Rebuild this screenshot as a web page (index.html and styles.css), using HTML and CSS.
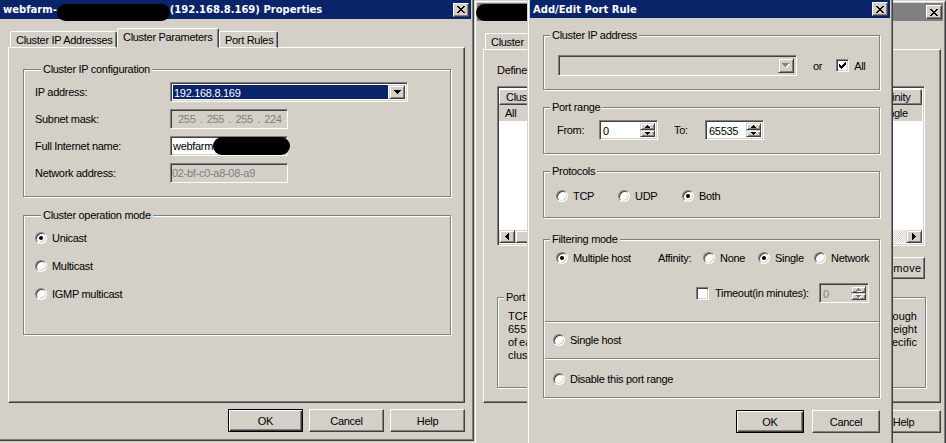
FILE: index.html
```html
<!DOCTYPE html>
<html lang="en">
<head>
    <meta charset="UTF-8">
    <meta name="viewport" content="width=device-width, initial-scale=1.0">
    <title>Add/Edit Port Rule</title>
    <link rel="stylesheet" href="styles.css">
</head>
<body>
<div class="screen">

    <!-- cluster properties window -->
    <div class="win win-props">
        <div class="titlebar">
            <span class="title-text">webfarm-</span><span class="blob blob-title"></span><span class="title-text">(192.168.8.169) Properties</span>
            <span class="close-btn"><svg width="8" height="7" viewBox="0 0 8 7" shape-rendering="crispEdges"><path d="M0 0h2v1H0zM6 0h2v1H6zM1 1h2v1H1zM5 1h2v1H5zM2 2h4v1H2zM3 3h2v1H3zM2 4h4v1H2zM1 5h2v1H1zM5 5h2v1H5zM0 6h2v1H0zM6 6h2v1H6z" fill="#000"/></svg></span>
        </div>
        <div class="win-body body-props">
            <div class="tabs">
                <div class="tab tab-ip">Cluster IP Addresses</div>
                <div class="tab tab-params active">Cluster Parameters</div>
                <div class="tab tab-rules">Port Rules</div>
            </div>
            <div class="panel panel-props">
                <div class="group group-ipconf">
                    <div class="legend">Cluster IP configuration</div>
                    <div class="field-row first">
                        <span class="field-label">IP address:</span>
                        <div class="combo combo-ip">
                            <span class="combo-value">192.168.8.169</span>
                            <span class="drop-btn"><svg width="7" height="4" viewBox="0 0 7 4" shape-rendering="crispEdges"><path d="M0 0h7v1H0zM1 1h5v1H1zM2 2h3v1H2zM3 3h1v1H3z" fill="#000"/></svg></span>
                        </div>
                    </div>
                    <div class="field-row">
                        <span class="field-label">Subnet mask:</span>
                        <div class="edit edit-short disabled ip-text">255 . 255 . 255 . 224</div>
                    </div>
                    <div class="field-row">
                        <span class="field-label">Full Internet name:</span>
                        <div class="edit edit-short name-text">webfarm-<span class="blob blob-name"></span></div>
                    </div>
                    <div class="field-row">
                        <span class="field-label">Network address:</span>
                        <div class="edit edit-short disabled mac-text">02-bf-c0-a8-08-a9</div>
                    </div>
                </div>
                <div class="group group-mode">
                    <div class="legend">Cluster operation mode</div>
                    <div class="radio-row first"><span class="radio checked"></span>Unicast</div>
                    <div class="radio-row"><span class="radio"></span>Multicast</div>
                    <div class="radio-row"><span class="radio"></span>IGMP multicast</div>
                </div>
            </div>
            <div class="dlg-buttons buttons-props">
                <button class="btn btn-wide default">OK</button>
                <button class="btn btn-wide">Cancel</button>
                <button class="btn btn-wide">Help</button>
            </div>
        </div>
    </div>

    <!-- port rules window (behind the dialog) -->
    <div class="win win-mid">
        <div class="titlebar inactive">
            <span class="blob blob-mid"></span><span class="title-text">(192.168.8.169) Properties</span>
            <span class="close-btn"><svg width="8" height="7" viewBox="0 0 8 7" shape-rendering="crispEdges"><path d="M0 0h2v1H0zM6 0h2v1H6zM1 1h2v1H1zM5 1h2v1H5zM2 2h4v1H2zM3 3h2v1H3zM2 4h4v1H2zM1 5h2v1H1zM5 5h2v1H5zM0 6h2v1H0zM6 6h2v1H6z" fill="#000"/></svg></span>
        </div>
        <div class="win-body body-mid">
            <div class="tabs">
                <div class="tab tab-ip">Cluster IP Addresses</div>
                <div class="tab tab-params">Cluster Parameters</div>
                <div class="tab tab-rules active">Port Rules</div>
            </div>
            <div class="panel panel-mid">
                <div class="caption">Defined port rules:</div>
                <div class="listview">
                    <div class="lv-header">
                        <span class="lv-col col-ip">Cluster IP address</span>
                        <span class="lv-col col-start">Start</span>
                        <span class="lv-col col-end">End</span>
                        <span class="lv-col col-proto">Protocol</span>
                        <span class="lv-col col-mode">Mode</span>
                        <span class="lv-col col-prio">Priority</span>
                        <span class="lv-col col-load">Load</span>
                        <span class="lv-col col-aff">Affinity</span>
                    </div>
                    <div class="lv-row">
                        <span class="lv-cell col-ip">All</span>
                        <span class="lv-cell col-start">0</span>
                        <span class="lv-cell col-end">65535</span>
                        <span class="lv-cell col-proto">Both</span>
                        <span class="lv-cell col-mode">Multiple</span>
                        <span class="lv-cell col-prio"></span>
                        <span class="lv-cell col-load">Equal</span>
                        <span class="lv-cell col-aff">Single</span>
                    </div>
                    <div class="lv-fill"></div>
                    <div class="hscroll">
                        <span class="scroll-btn"><svg width="4" height="7" viewBox="0 0 4 7" shape-rendering="crispEdges"><path d="M3 0h1v7H3zM2 1h1v5H2zM1 2h1v3H1zM0 3h1v1H0z" fill="#000"/></svg></span>
                        <span class="scroll-thumb"></span>
                        <span class="scroll-track"></span>
                        <span class="scroll-btn"><svg width="4" height="7" viewBox="0 0 4 7" shape-rendering="crispEdges"><path d="M0 0h1v7H0zM1 1h1v5H1zM2 2h1v3H2zM3 3h1v1H3z" fill="#000"/></svg></span>
                    </div>
                </div>
                <div class="list-buttons">
                    <button class="btn btn-wide">Add...</button>
                    <button class="btn btn-wide">Edit...</button>
                    <button class="btn btn-remove">Remove</button>
                </div>
                <div class="group group-desc">
                    <div class="legend">Port rule description</div>
                    <div class="desc">
                        <span class="desc-line">TCP and UDP traffic directed to any cluster IP address that arrives on ports 0 through</span>
                        <span class="desc-line">65535 is balanced across multiple members of the cluster according to the load weight</span>
                        <span class="desc-line">of each member. Client IP addresses are used to assign client connections to a specific</span>
                        <span class="desc-line last">cluster host.</span>
                    </div>
                </div>
            </div>
            <div class="dlg-buttons buttons-mid">
                <button class="btn btn-wide">OK</button>
                <button class="btn btn-wide">Cancel</button>
                <button class="btn btn-wide">Help</button>
            </div>
        </div>
    </div>

    <!-- add/edit port rule dialog -->
    <div class="win win-rule">
        <div class="titlebar">
            <span class="title-text">Add/Edit Port Rule</span>
            <span class="close-btn"><svg width="8" height="7" viewBox="0 0 8 7" shape-rendering="crispEdges"><path d="M0 0h2v1H0zM6 0h2v1H6zM1 1h2v1H1zM5 1h2v1H5zM2 2h4v1H2zM3 3h2v1H3zM2 4h4v1H2zM1 5h2v1H1zM5 5h2v1H5zM0 6h2v1H0zM6 6h2v1H6z" fill="#000"/></svg></span>
        </div>
        <div class="win-body body-rule">
            <div class="group group-cip">
                <div class="legend">Cluster IP address</div>
                <div class="cip-row">
                    <div class="combo combo-cip disabled">
                        <span class="combo-value"></span>
                        <span class="drop-btn"><svg width="8" height="5" viewBox="0 0 8 5" shape-rendering="crispEdges"><path d="M1 1h7v1H1zM2 2h5v1H2zM3 3h3v1H3zM4 4h1v1H4z" fill="#fff"/><path d="M0 0h7v1H0zM1 1h5v1H1zM2 2h3v1H2zM3 3h1v1H3z" fill="#808080"/></svg></span>
                    </div>
                    <span class="or-text">or</span>
                    <span class="checkbox"><svg width="7" height="7" viewBox="0 0 7 7" shape-rendering="crispEdges"><path d="M6 0h1v3H6zM5 1h1v3H5zM4 2h1v3H4zM3 3h1v3H3zM2 4h1v3H2zM1 3h1v3H1zM0 2h1v3H0z" fill="#000"/></svg></span>
                    <span class="check-label">All</span>
                </div>
            </div>

            <div class="group group-range">
                <div class="legend">Port range</div>
                <div class="range-row">
                    <span class="range-label from-label">From:</span>
                    <div class="spin">
                        <span class="spin-value">0</span>
                        <span class="spin-btns">
                            <span class="spin-btn"><svg width="5" height="3" viewBox="0 0 5 3" shape-rendering="crispEdges"><path d="M2 0h1v1H2zM1 1h3v1H1zM0 2h5v1H0z" fill="#000"/></svg></span>
                            <span class="spin-btn"><svg width="5" height="3" viewBox="0 0 5 3" shape-rendering="crispEdges"><path d="M0 0h5v1H0zM1 1h3v1H1zM2 2h1v1H2z" fill="#000"/></svg></span>
                        </span>
                    </div>
                    <span class="range-label to-label">To:</span>
                    <div class="spin">
                        <span class="spin-value">65535</span>
                        <span class="spin-btns">
                            <span class="spin-btn"><svg width="5" height="3" viewBox="0 0 5 3" shape-rendering="crispEdges"><path d="M2 0h1v1H2zM1 1h3v1H1zM0 2h5v1H0z" fill="#000"/></svg></span>
                            <span class="spin-btn"><svg width="5" height="3" viewBox="0 0 5 3" shape-rendering="crispEdges"><path d="M0 0h5v1H0zM1 1h3v1H1zM2 2h1v1H2z" fill="#000"/></svg></span>
                        </span>
                    </div>
                </div>
            </div>

            <div class="group group-proto">
                <div class="legend">Protocols</div>
                <div class="option-row">
                    <span class="opt opt-tcp"><span class="radio"></span>TCP</span>
                    <span class="opt opt-udp"><span class="radio"></span>UDP</span>
                    <span class="opt"><span class="radio checked"></span>Both</span>
                </div>
            </div>

            <div class="group group-filter">
                <div class="legend">Filtering mode</div>
                <div class="option-row filter-row">
                    <span class="opt opt-multi"><span class="radio checked"></span>Multiple host</span>
                    <span class="opt opt-aff">Affinity:</span>
                    <span class="opt opt-none"><span class="radio"></span>None</span>
                    <span class="opt opt-single"><span class="radio checked"></span>Single</span>
                    <span class="opt"><span class="radio"></span>Network</span>
                </div>
                <div class="timeout-row">
                    <span class="checkbox"></span>
                    <span class="check-label">Timeout(in minutes):</span>
                    <div class="spin spin-timeout disabled">
                        <span class="spin-value">0</span>
                        <span class="spin-btns">
                            <span class="spin-btn"><svg width="6" height="4" viewBox="0 0 6 4" shape-rendering="crispEdges"><path d="M3 1h1v1H3zM2 2h3v1H2zM1 3h5v1H1z" fill="#fff"/><path d="M2 0h1v1H2zM1 1h3v1H1zM0 2h5v1H0z" fill="#808080"/></svg></span>
                            <span class="spin-btn"><svg width="6" height="4" viewBox="0 0 6 4" shape-rendering="crispEdges"><path d="M1 1h5v1H1zM2 2h3v1H2zM3 3h1v1H3z" fill="#fff"/><path d="M0 0h5v1H0zM1 1h3v1H1zM2 2h1v1H2z" fill="#808080"/></svg></span>
                        </span>
                    </div>
                </div>
                <div class="separator sep-first"></div>
                <div class="option-row section-row single-row"><span class="radio"></span>Single host</div>
                <div class="separator sep-second"></div>
                <div class="option-row section-row disable-row"><span class="radio"></span>Disable this port range</div>
            </div>

            <div class="dlg-buttons buttons-rule">
                <button class="btn btn-rule default">OK</button>
                <button class="btn btn-rule">Cancel</button>
            </div>
        </div>
    </div>

</div>
</body>
</html>
```

FILE: styles.css
```css
body {
    margin: 0;
    font-family: "Liberation Sans", Arial, sans-serif;
    font-size: 11px;
    letter-spacing: -0.3px;
    color: #000;
    background-color: #d4d0c8;
}

.screen {
    position: relative;
    width: 946px;
    height: 443px;
    overflow: hidden;
    background-color: #d4d0c8;
}

/* windows */
.win {
    position: absolute;
    box-sizing: border-box;
    background-color: #d4d0c8;
    border: 1px solid;
    border-color: #d4d0c8 #404040 #404040 #d4d0c8;
    box-shadow: inset 1px 1px #fff, inset -1px -1px #808080;
    padding: 2px;
}

.win-props {
    left: -3px;
    top: -3px;
    width: 477px;
    height: 444px;
    z-index: 1;
}

.win-mid {
    left: 474px;
    top: 0;
    width: 472px;
    height: 470px;
    z-index: 2;
}

.win-rule {
    left: 527px;
    top: -3px;
    width: 366px;
    height: 470px;
    z-index: 3;
}

.titlebar {
    display: flex;
    align-items: center;
    height: 18px;
    padding-left: 3px;
    background-color: #0a246a;
    color: #fff;
    font-family: "DejaVu Sans", Verdana, sans-serif;
    font-weight: bold;
    font-size: 10px;
    letter-spacing: 0;
    white-space: nowrap;
}

.win-props .titlebar {
    height: 19px;
}

.titlebar.inactive {
    background-color: #808080;
    color: #d4d0c8;
    padding-left: 0;
}

.close-btn {
    margin-left: auto;
    margin-right: 2px;
    box-sizing: border-box;
    width: 16px;
    height: 14px;
    display: flex;
    align-items: center;
    justify-content: center;
    background-color: #d4d0c8;
    border: 1px solid;
    border-color: #fff #404040 #404040 #fff;
    box-shadow: inset -1px -1px #808080;
}

.win-mid .close-btn {
    margin-right: 1px;
}

.blob {
    display: inline-block;
    background-color: #000;
}

.blob-title {
    width: 113px;
    height: 17px;
    border-radius: 9px;
    align-self: flex-end;
    margin-bottom: -2px;
}

.blob-mid {
    width: 80px;
    height: 17px;
    border-radius: 9px;
    margin-left: -1px;
}

.blob-name {
    width: 77px;
    height: 18px;
    border-radius: 9px;
    margin-left: -3px;
    vertical-align: top;
}

/* tabs */
.body-props {
    padding: 9px 0 0 8px;
}

.body-mid {
    padding: 9px 0 0 6px;
}

.body-rule {
    padding: 0 10px 0 13px;
}

.tabs {
    display: flex;
    align-items: flex-end;
    height: 20px;
    padding-left: 2px;
    margin-bottom: -1px;
    position: relative;
}

.tab {
    box-sizing: border-box;
    height: 17px;
    display: flex;
    align-items: center;
    padding: 0 0 0 5px;
    border: 1px solid;
    border-color: #fff #404040 #fff #fff;
    box-shadow: inset -1px 0 #808080;
    border-radius: 2px 2px 0 0;
    white-space: nowrap;
}

.tab-ip {
    width: 107px;
}

.tab-params {
    width: 102px;
}

.tab-rules {
    width: 59px;
}

.tab.active {
    height: 20px;
    padding-bottom: 2px;
    border-bottom-color: #d4d0c8;
    background-color: #d4d0c8;
    z-index: 1;
}

.panel {
    box-sizing: border-box;
    border: 1px solid;
    border-color: #fff #404040 #404040 #fff;
    box-shadow: inset -1px -1px #808080;
}

.panel-props {
    width: 457px;
    height: 356px;
    padding: 21px 0 0 14px;
}

.panel-mid {
    width: 458px;
    height: 354px;
    padding: 0 0 0 13px;
}

/* group boxes */
.group {
    box-sizing: border-box;
    border: 1px solid #808080;
    box-shadow: inset 1px 1px #fff, 1px 1px #fff;
}

.legend {
    width: max-content;
    margin: -7px 0 0 6px;
    padding: 0 2px;
    line-height: 13px;
    background-color: #d4d0c8;
}

.group-ipconf {
    width: 428px;
    height: 128px;
    padding-left: 11px;
}

.group-mode {
    width: 428px;
    height: 120px;
    margin-top: 18px;
    padding-left: 11px;
}

.field-row {
    display: flex;
    align-items: center;
    height: 20px;
    margin-top: 7px;
}

.field-row.first {
    margin-top: 6px;
}

.field-label {
    width: 135px;
}

/* edit boxes */
.edit, .combo, .spin {
    box-sizing: border-box;
    height: 20px;
    background-color: #fff;
    border: 1px solid;
    border-color: #808080 #fff #fff #808080;
    box-shadow: inset 1px 1px #404040, inset -1px -1px #d4d0c8;
    white-space: nowrap;
}

.edit {
    line-height: 18px;
    padding-left: 2px;
}

.edit-short {
    width: 118px;
}

.edit.disabled, .combo.disabled, .spin.disabled {
    background-color: #d4d0c8;
    color: #808080;
}

.ip-text {
    padding-left: 7px;
    word-spacing: 1.5px;
}

.mac-text {
    padding-left: 1px;
}

.combo {
    display: flex;
    padding: 2px;
}

.combo-ip {
    width: 238px;
}

.combo-value {
    flex: 1;
    line-height: 16px;
    padding-left: 1px;
}

.combo-ip .combo-value {
    background-color: #0a246a;
    color: #fff;
    margin: 0 1px 0 0;
}

.drop-btn {
    box-sizing: border-box;
    width: 16px;
    display: flex;
    align-items: center;
    justify-content: center;
    background-color: #d4d0c8;
    border: 1px solid;
    border-color: #d4d0c8 #404040 #404040 #d4d0c8;
    box-shadow: inset 1px 1px #fff, inset -1px -1px #808080;
}

/* radios and checkboxes */
.radio-row {
    display: flex;
    align-items: center;
    height: 16px;
    margin-top: 12px;
}

.radio-row.first {
    margin-top: 8px;
}

.radio {
    box-sizing: border-box;
    position: relative;
    flex: none;
    width: 12px;
    height: 12px;
    margin-right: 5px;
    border-radius: 50%;
    background-color: #fff;
    border: 1px solid;
    border-color: #808080 #fff #fff #808080;
    box-shadow: inset 1px 1px #404040, inset -1px -1px #d4d0c8;
}

.radio.checked::after {
    content: "";
    position: absolute;
    left: 3px;
    top: 3px;
    width: 4px;
    height: 4px;
    border-radius: 50%;
    background-color: #000;
}

.checkbox {
    box-sizing: border-box;
    flex: none;
    width: 13px;
    height: 13px;
    display: flex;
    align-items: center;
    justify-content: center;
    background-color: #fff;
    border: 1px solid;
    border-color: #808080 #fff #fff #808080;
    box-shadow: inset 1px 1px #404040, inset -1px -1px #d4d0c8;
}

/* buttons */
.dlg-buttons {
    display: flex;
    justify-content: flex-end;
}

.buttons-props {
    width: 457px;
    margin-top: 6px;
    gap: 6px;
}

.buttons-mid {
    width: 458px;
    margin-top: 7px;
    gap: 6px;
}

.buttons-rule {
    width: 337px;
    margin-top: 12px;
    gap: 8px;
}

.btn {
    box-sizing: border-box;
    height: 23px;
    padding: 0;
    font-family: "Liberation Sans", Arial, sans-serif;
    font-size: 11px;
    letter-spacing: inherit;
    color: #000;
    background-color: #d4d0c8;
    border: 1px solid;
    border-color: #fff #404040 #404040 #fff;
    box-shadow: inset -1px -1px #808080;
}

.btn.default {
    border-color: #000;
    box-shadow: inset 1px 1px #fff, inset -1px -1px #404040, inset -2px -2px #808080;
}

.btn-wide {
    width: 75px;
}

.btn-rule {
    width: 68px;
}

.btn-remove {
    width: 56px;
    height: 22px;
    padding-left: 6px;
    letter-spacing: 0.3px;
}

/* port rules list */
.caption {
    margin-top: 14px;
    line-height: 13px;
}

.listview {
    box-sizing: border-box;
    width: 428px;
    height: 160px;
    margin-top: 9px;
    display: flex;
    flex-direction: column;
    background-color: #fff;
    border: 1px solid;
    border-color: #808080 #fff #fff #808080;
    box-shadow: inset 1px 1px #404040, inset -1px -1px #d4d0c8;
    padding: 2px 2px 2px 1px;
}

.lv-header, .lv-row {
    display: flex;
    white-space: nowrap;
}

.lv-col {
    box-sizing: border-box;
    height: 16px;
    line-height: 14px;
    padding-left: 6px;
    overflow: hidden;
    background-color: #d4d0c8;
    border: 1px solid;
    border-color: #fff #404040 #404040 #fff;
    box-shadow: inset -1px -1px #808080;
}

.lv-row {
    background-color: #d4d0c8;
    height: 16px;
    line-height: 16px;
}

.lv-cell {
    box-sizing: border-box;
    padding-left: 6px;
    overflow: hidden;
}

.col-ip { width: 100px; }
.col-start { width: 40px; }
.col-end { width: 45px; }
.col-proto { width: 52px; }
.col-mode { width: 50px; }
.col-prio { width: 45px; }
.col-load { width: 45px; }
.col-aff { flex: 1; padding-left: 3px; }

.lv-fill {
    flex: 1;
}

.hscroll {
    display: flex;
    height: 13px;
}

.scroll-btn, .scroll-thumb {
    box-sizing: border-box;
    background-color: #d4d0c8;
    border: 1px solid;
    border-color: #d4d0c8 #404040 #404040 #d4d0c8;
    box-shadow: inset 1px 1px #fff, inset -1px -1px #808080;
}

.scroll-btn {
    width: 16px;
    display: flex;
    align-items: center;
    justify-content: center;
}

.scroll-thumb {
    width: 330px;
}

.scroll-track {
    flex: 1;
    background: repeating-conic-gradient(#fff 0 25%, #d4d0c8 0 50%) 0 0 / 2px 2px;
}

.list-buttons {
    width: 428px;
    display: flex;
    justify-content: flex-end;
    gap: 6px;
    margin-top: 11px;
}

.list-buttons .btn {
    height: 22px;
}

.group-desc {
    width: 429px;
    height: 91px;
    margin-top: 18px;
}

.desc {
    margin-top: 6px;
    padding: 0 8px 0 10px;
    line-height: 13px;
    letter-spacing: 0;
    word-spacing: -2px;
}

.desc-line {
    display: block;
    white-space: nowrap;
    text-align: justify;
    text-align-last: justify;
}

.desc-line.last {
    text-align-last: left;
}

/* add/edit port rule */
.group-cip, .group-range, .group-proto, .group-filter {
    width: 337px;
}

.group-cip {
    height: 55px;
    margin-top: 17px;
}

.cip-row {
    display: flex;
    align-items: center;
    margin-top: 13px;
    padding-left: 14px;
}

.combo-cip {
    width: 239px;
    height: 21px;
}

.or-text {
    margin-left: 16px;
}

.cip-row .checkbox {
    margin-left: 14px;
}

.check-label {
    margin-left: 5px;
}

.group-range {
    height: 47px;
    margin-top: 17px;
}

.range-row {
    display: flex;
    align-items: center;
    margin-top: 6px;
    padding-left: 13px;
}

.from-label {
    width: 42px;
}

.to-label {
    width: 31px;
    margin-left: 16px;
}

.spin {
    display: flex;
    width: 59px;
    padding: 2px;
}

.spin-value {
    flex: 1;
    line-height: 16px;
    padding-left: 1px;
}

.spin-btns {
    display: flex;
    flex-direction: column;
    width: 15px;
}

.spin-btn {
    box-sizing: border-box;
    flex: 1;
    display: flex;
    align-items: center;
    justify-content: center;
    background-color: #d4d0c8;
    border: 1px solid;
    border-color: #d4d0c8 #404040 #404040 #d4d0c8;
    box-shadow: inset 1px 1px #fff, inset -1px -1px #808080;
}

.group-proto {
    height: 47px;
    margin-top: 17px;
}

.option-row {
    display: flex;
    align-items: center;
    height: 16px;
    padding-left: 12px;
    white-space: nowrap;
}

.group-proto .option-row {
    margin-top: 10px;
}

.opt {
    display: flex;
    align-items: center;
}

.opt-tcp { width: 62px; }
.opt-udp { width: 64px; }

.group-filter {
    height: 159px;
    margin-top: 21px;
}

.filter-row {
    margin-top: 4px;
}

.opt-multi { width: 102px; }
.opt-aff { width: 45px; }
.opt-none { width: 55px; }
.opt-single { width: 56px; }

.timeout-row {
    display: flex;
    align-items: center;
    height: 20px;
    margin-top: 17px;
    padding: 0 10px 0 152px;
}

.timeout-row .check-label {
    margin-left: 6px;
}

.spin-timeout {
    width: 50px;
    margin-left: auto;
}

.separator {
    height: 0;
    margin-left: 1px;
    border-top: 1px solid #808080;
    border-bottom: 1px solid #fff;
}

.sep-first {
    margin-top: 18px;
}

.section-row {
    padding-left: 9px;
}

.single-row {
    margin-top: 9px;
}

.sep-second {
    margin-top: 10px;
}

.disable-row {
    margin-top: 11px;
}
```
